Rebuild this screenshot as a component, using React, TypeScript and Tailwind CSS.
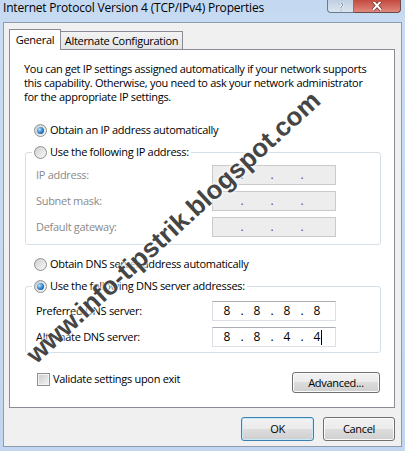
import { Fragment, PropsWithChildren } from "react";
import clsx from "clsx";

const Radio = ({ checked }: { checked?: boolean }) => (
    <span className="flex h-[13px] w-[13px] shrink-0 items-center justify-center rounded-full border border-[#8e8f8f] bg-[linear-gradient(135deg,#cfcfcf,#f8f8f8)]">
        {checked && (
            <span className="h-[7px] w-[7px] rounded-full bg-[radial-gradient(circle_at_35%_35%,#b5e6ff,#2a7bc6_55%,#0d3f7a)]" />
        )}
    </span>
);

const Option = ({ checked, children }: PropsWithChildren<{ checked?: boolean }>) => (
    <div className="flex h-[14px] items-center gap-[3px]">
        <Radio checked={checked} />
        <span>{children}</span>
    </div>
);

type IpBoxProps = { values?: string[]; disabled?: boolean; cursor?: boolean };
const IpBox = ({ values, disabled, cursor }: IpBoxProps) => (
    <div
        className={clsx(
            "flex h-[20px] w-[124px] items-center border pl-px text-[12px] tracking-normal",
            disabled
                ? "border-[#cacaca] bg-[#ededed] text-[#555]"
                : "border-[#dbdfe6] border-t-[#abadb3] bg-white text-black",
        )}
    >
        {[0, 1, 2, 3].map(i => (
            <Fragment key={i}>
                {i > 0 && <span className="w-[4px] text-center">.</span>}
                <span className="relative w-[26px] text-center">
                    {values?.[i]}
                    {cursor && i === 3 && <span className="absolute top-0 ml-px h-[15px] w-px bg-black" />}
                </span>
            </Fragment>
        ))}
    </div>
);

const FieldRow = ({ label, ...box }: IpBoxProps & { label: string }) => (
    <div className="flex h-[20px] items-center justify-between pr-[44px] pl-[10px]">
        <span>{label}</span>
        <IpBox {...box} />
    </div>
);

const Group = ({ legend, checked, children }: PropsWithChildren<{ legend: string; checked?: boolean }>) => (
    <fieldset className="ml-[15px] w-[356px] rounded-[3px] border border-[#d5dfe5]">
        <legend className="ml-[6px] px-[2px]">
            <Option checked={checked}>{legend}</Option>
        </legend>
        {children}
    </fieldset>
);

const Button = ({ primary, className, children }: PropsWithChildren<{ primary?: boolean; className?: string }>) => (
    <button
        className={clsx(
            "rounded-[3px] border text-center",
            "bg-[linear-gradient(#f2f2f2_0%,#ebebeb_50%,#dddddd_50%,#cfcfcf_100%)]",
            primary
                ? "border-[#3c7fb1] shadow-[inset_0_0_0_1px_#c6e9fb]"
                : "border-[#707070] shadow-[inset_0_0_0_1px_#fbfbfb]",
            className,
        )}
    >
        {children}
    </button>
);

export default function App() {
    return (
        <div className="relative h-[451px] w-[405px] overflow-hidden bg-[linear-gradient(#c3d8f1,#c9dcf2_30px,#c2d7ef)] font-['Open_Sans',sans-serif] text-[11px] leading-[14px] tracking-[-0.3px] whitespace-nowrap text-black">
            <div className="flex h-[22px] justify-between">
                <span className="pt-[1px] pl-[3px] text-[12px] tracking-[-0.2px]">
                    Internet Protocol Version 4 (TCP/IPv4) Properties
                </span>
                <div className="mr-[4px] flex h-[13px]">
                    <div className="flex w-[27px] items-end justify-center rounded-bl-[4px] border border-t-0 border-[#6b7c91] bg-[linear-gradient(#bfcfe2,#dbe5f0)]">
                        <svg width="8" height="8" viewBox="0 0 8 8" className="mb-[1px]">
                            <path d="M1 0 Q4 -1 6 1 Q6 3 4 4 L4 5.5 M4 7 L4 8" fill="none" stroke="#fff" strokeWidth="2" />
                            <path d="M1 0 Q4 -1 6 1 Q6 3 4 4 L4 5.5 M4 7 L4 8" fill="none" stroke="#55647a" strokeWidth="0.8" />
                        </svg>
                    </div>
                    <div className="flex w-[47px] items-end justify-center rounded-br-[4px] border border-t-0 border-l-0 border-[#6b4a4a] bg-[linear-gradient(#c44a3f,#e0877d)]">
                        <svg width="12" height="9" viewBox="0 0 12 9" className="mb-[1px]">
                            <path d="M1 -2 L10 8 M11 -2 L2 8" stroke="#6a2a24" strokeWidth="3.4" />
                            <path d="M1 -2 L10 8 M11 -2 L2 8" stroke="#fff" strokeWidth="2" />
                        </svg>
                    </div>
                </div>
            </div>

            <div className="mx-[3px] h-[425px] border border-[#8c9bae] bg-[#f0f0f0]">
                <div className="mt-[6px] ml-[5px] flex h-[20px] items-end">
                    <div className="relative z-10 -mb-px flex h-[21px] w-[52px] justify-center border border-b-0 border-[#898c95] bg-white pt-[3px]">
                        General
                    </div>
                    <div className="flex h-[18px] w-[122px] justify-center border border-b-0 border-l-0 border-[#898c95] bg-[linear-gradient(#f3f3f3,#e4e4e4)] pt-[2px]">
                        Alternate Configuration
                    </div>
                </div>

                <div className="ml-[5px] h-[359px] w-[386px] border border-[#898c95] bg-white">
                    <p className="pt-[12px] pl-[14px]">
                        You can get IP settings assigned automatically if your network supports
                        <br />
                        this capability. Otherwise, you need to ask your network administrator
                        <br />
                        for the appropriate IP settings.
                    </p>

                    <div className="mt-[19px] pl-[24px]">
                        <Option checked>Obtain an IP address automatically</Option>
                    </div>

                    <div className="mt-[8px]">
                        <Group legend="Use the following IP address:">
                            <div className="flex flex-col gap-[6px] pt-[6px] pb-[7px] text-[#8a8a8a]">
                                <FieldRow label="IP address:" disabled />
                                <FieldRow label="Subnet mask:" disabled />
                                <FieldRow label="Default gateway:" disabled />
                            </div>
                        </Group>
                    </div>

                    <div className="mt-[12px] pl-[24px]">
                        <Option>Obtain DNS server address automatically</Option>
                    </div>

                    <div className="mt-[8px]">
                        <Group legend="Use the following DNS server addresses:" checked>
                            <div className="flex flex-col gap-[6px] pt-[8px] pb-[5px]">
                                <FieldRow label="Preferred DNS server:" values={["8", "8", "8", "8"]} />
                                <FieldRow label="Alternate DNS server:" values={["8", "8", "4", "4"]} cursor />
                            </div>
                        </Group>
                    </div>

                    <div className="mt-[19px] flex items-start justify-between pr-[14px] pl-[27px]">
                        <div className="flex items-center gap-[3px]">
                            <span className="h-[13px] w-[13px] border border-[#8e8f8f] bg-[linear-gradient(135deg,#cbcbcb,#f4f4f4)] shadow-[inset_0_0_0_1px_#f4f4f4]" />
                            <span>Validate settings upon exit</span>
                        </div>
                        <Button className="h-[21px] w-[88px]">Advanced...</Button>
                    </div>
                </div>

                <div className="mt-[9px] mr-[6px] flex justify-end gap-[9px]">
                    <Button primary className="h-[24px] w-[73px]">
                        OK
                    </Button>
                    <Button className="h-[24px] w-[72px]">Cancel</Button>
                </div>
            </div>

            <div className="pointer-events-none absolute top-[212px] left-[-27px] w-[400px] -rotate-[42.5deg] text-center font-['Liberation_Sans',sans-serif] text-[26px] leading-[30px] font-bold tracking-normal text-[#454545] [text-shadow:0_0_2px_#fff,0_0_3px_#fff,0_0_4px_#fff]">
                www.info-tipstrik.blogspot.com
            </div>
        </div>
    );
}
